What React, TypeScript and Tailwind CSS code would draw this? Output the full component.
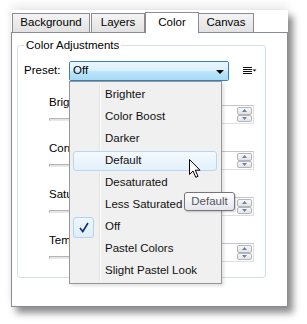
import React from "react";

const ITEMS = [
  "Brighter",
  "Color Boost",
  "Darker",
  "Default",
  "Desaturated",
  "Less Saturated",
  "Off",
  "Pastel Colors",
  "Slight Pastel Look",
];

const ROWS = ["Brightness", "Contrast", "Saturation", "Temperature"];

const FONT = "font-['Liberation_Sans',Arial,sans-serif]";

function SpinBox() {
  return (
    <div className="mt-[10px] mr-[11px] h-[19px] w-[60px] border border-[#dcdee3] border-t-[#c3c6cc] bg-white flex justify-end p-px">
      <div className="flex flex-col w-[15px]">
        <div className="h-[8px] rounded-[2px] border border-[#b3b5ba] bg-gradient-to-b from-[#f8f8f8] to-[#e3e3e3] flex items-center justify-center">
          <svg width="5" height="3" viewBox="0 0 5 3">
            <path d="M2.5 0 L5 3 L0 3 Z" fill="#6383b8" />
          </svg>
        </div>
        <div className="h-[8px] rounded-[2px] border border-[#b3b5ba] bg-gradient-to-b from-[#f8f8f8] to-[#e3e3e3] flex items-center justify-center">
          <svg width="5" height="3" viewBox="0 0 5 3">
            <path d="M0 0 L5 0 L2.5 3 Z" fill="#6383b8" />
          </svg>
        </div>
      </div>
    </div>
  );
}

export default function App() {
  return (
    <div className={`relative w-[307px] h-[324px] bg-white overflow-hidden text-[11.5px] text-[#000] ${FONT}`}>
      {/* Window with drop shadow */}
      <div className="ml-[11px] mt-[10px] w-[277px] h-[297px] bg-white shadow-[5px_6px_7px_rgba(0,0,0,0.45),0_-5px_8px_rgba(0,0,0,0.08)]">
        {/* Tabs */}
        <div className="flex items-end h-[22px] pl-px">
          <div className="w-[78px] h-[19px] border border-b-0 border-[#898c95] bg-gradient-to-b from-[#f4f4f4] to-[#e2e2e2] flex items-center justify-center">
            Background
          </div>
          <div className="ml-[1px] w-[54px] h-[19px] border border-b-0 border-[#898c95] bg-gradient-to-b from-[#f4f4f4] to-[#e2e2e2] flex items-center justify-center">
            Layers
          </div>
          <div className="relative z-10 -mb-px w-[54px] h-[21px] border border-b-0 border-[#898c95] bg-white flex items-center justify-center pb-px">
            Color
          </div>
          <div className="w-[55px] h-[19px] border border-b-0 border-l-0 border-[#898c95] bg-gradient-to-b from-[#f4f4f4] to-[#e2e2e2] flex items-center justify-center">
            Canvas
          </div>
        </div>

        {/* Tab page */}
        <div className="h-[275px] border border-[#898c95] bg-white">
          <div className="relative mt-[12px] ml-[5px] w-[249px] h-[233px] rounded-[3px] border border-[#d5dfe5]">
            <span className="absolute -top-[8px] left-[6px] bg-white px-[2px] leading-[14px]">
              Color Adjustments
            </span>

            {/* Preset row */}
            <div className="mt-[15px] ml-[6px] flex items-center h-[20px]">
              <span className="w-[45px]">Preset:</span>
              <div className="relative w-[160px] h-[20px] rounded-[2px] border border-[#3c7fb1] overflow-hidden flex items-center">
                <div className="absolute inset-0 flex flex-col">
                  <div className="h-1/2 bg-gradient-to-b from-[#eaf6fd] to-[#d9f0fc]" />
                  <div className="h-1/2 bg-gradient-to-b from-[#bee6fd] to-[#a7d9f5]" />
                </div>
                <span className="relative pl-[3px]">Off</span>
                <svg className="absolute right-[4px] top-[8px]" width="8" height="4" viewBox="0 0 8 4">
                  <path d="M0 0 L8 0 L4 4 Z" fill="#000" />
                </svg>
              </div>
              <svg className="ml-[14px]" width="14" height="8" viewBox="0 0 14 8">
                <rect x="0" y="0" width="9" height="1" fill="#111" />
                <rect x="0" y="2" width="9" height="1" fill="#111" />
                <rect x="0" y="4" width="9" height="1" fill="#111" />
                <rect x="0" y="6" width="9" height="1" fill="#111" />
                <path d="M9.5 2.5 L13.5 2.5 L11.5 4.5 Z" fill="#111" />
              </svg>
            </div>

            {/* Slider rows */}
            <div className="mt-[14px]">
              {ROWS.map((r) => (
                <div key={r} className="h-[46px] flex justify-between">
                  <div className="pl-[31px]">
                    <div className="h-[14px] leading-[14px]">{r}</div>
                    <div className="mt-[9px] w-[160px] h-[3px] border border-[#b4b4b4] border-b-[#e8e8e8] bg-[#e4e4e4]" />
                  </div>
                  <SpinBox />
                </div>
              ))}
            </div>
          </div>
        </div>
      </div>

      {/* Dropdown list */}
      <div className="absolute left-[69px] top-[81px] w-[153px] h-[203px] border border-[#979797] bg-[#f0f0f0] pt-[2px] shadow-[2px_2px_3px_rgba(0,0,0,0.12)]">
        <div className="absolute left-[29px] top-[2px] bottom-[2px] w-[2px] border-l border-[#e2e3e3] border-r border-r-white" />
        {ITEMS.map((it) => {
          const hot = it === "Default";
          const checked = it === "Off";
          return (
            <div key={it} className="h-[22px] ml-[3px] mr-[4px] flex items-center">
              <div
                className={
                  hot
                    ? "relative w-full h-[20px] flex items-center rounded-[3px] border border-[#b8d6f0] bg-gradient-to-b from-[#f5fafe] to-[#e3f0fb]"
                    : "relative w-full h-[20px] flex items-center rounded-[3px] border border-transparent"
                }
              >
                {checked ? (
                  <div className="absolute -left-px -top-[1px] w-[21px] h-[21px] rounded-[3px] border border-[#aed4f2] bg-gradient-to-b from-[#eef6fd] to-[#e0eefb] flex items-center justify-center">
                    <svg width="10" height="11" viewBox="0 0 10 11">
                      <path d="M1 6 L3.8 9.5 L9 1" fill="none" stroke="#0e2d7c" strokeWidth="1.6" />
                    </svg>
                  </div>
                ) : null}
                <span className="pl-[31px] text-[#101010]">{it}</span>
              </div>
            </div>
          );
        })}
      </div>

      {/* Tooltip */}
      <div className="absolute left-[184px] top-[192px] w-[51px] h-[19px] rounded-[3px] border border-[#767676] bg-gradient-to-b from-white to-[#e4e5f0] flex items-center justify-center text-[#575757] shadow-[1px_1px_2px_rgba(0,0,0,0.2)]">
        Default
      </div>

      {/* Mouse cursor */}
      <svg className="absolute left-[188px] top-[158px]" width="14" height="21" viewBox="0 0 14 21">
        <path
          d="M1.5 1.5 L1.5 16.5 L5 13 L7.8 19.3 L10 18.3 L7.3 12.2 L12 12.2 Z"
          fill="#fff"
          stroke="#000"
          strokeWidth="1"
          strokeLinejoin="miter"
        />
      </svg>
    </div>
  );
}
